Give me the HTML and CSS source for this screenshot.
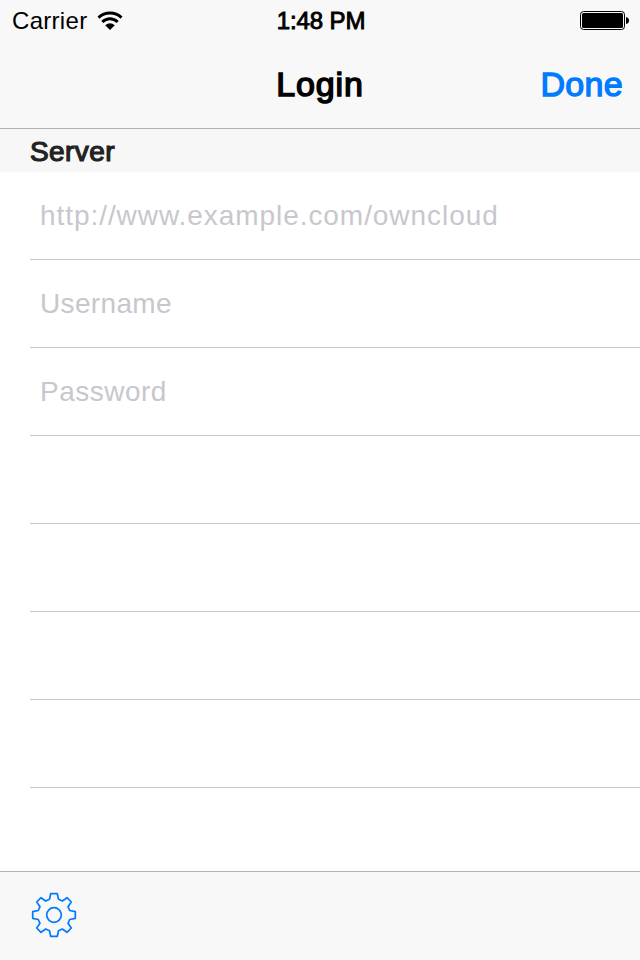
FILE: index.html
```html
<!DOCTYPE html>
<html lang="en">
<head>
<meta charset="utf-8">
<title>Login</title>
<link rel="stylesheet" href="styles.css">
</head>
<body>
<header class="top">
  <div class="status">
    <div class="carrier"><span class="carrier-name">Carrier</span>
      <svg class="wifi" width="26" height="20" viewBox="0 0 26 20">
        <path d="M1.500 6.600C8 .5 18 .5 24.500 6.600M5.300 11C9.800 6.800 16.200 6.800 20.700 11" fill="none" stroke="#000" stroke-width="3"/>
        <path d="M8.200 14.200Q13 10.400 17.800 14.200L13 19Z"/>
      </svg>
    </div>
    <span class="time">1:48 PM</span>
    <svg class="battery" width="50" height="20" viewBox="0 0 50 20">
      <rect x=".5" y=".5" width="44" height="18" rx="3" fill="none" stroke="#000"/>
      <rect x="2" y="2" width="41" height="15" rx="1.500"/>
      <path d="M46 6Q49 6.500 49 9.500T46 13Z"/>
    </svg>
  </div>
  <nav class="nav"><h1 class="title">Login</h1><a class="done">Done</a></nav>
</header>
<main class="table">
  <h2 class="section"><span>Server</span></h2>
  <div class="row"><span class="url">http://www.example.com/owncloud</span></div>
  <div class="row"><span class="user">Username</span></div>
  <div class="row"><span class="pass">Password</span></div>
  <div class="row"></div>
  <div class="row"></div>
  <div class="row"></div>
  <div class="row"></div>
</main>
<footer class="toolbar">
  <svg width="48" height="48" viewBox="-24 -24 48 48" fill="none" stroke="#007aff" stroke-width="1.700" stroke-linejoin="round">
    <circle r="7.300"/>
    <path d="M-3.300-21.300H3.300L4.500-15.700L8.300-14L13-17.300L17.300-13L14-8.300L15.700-4.500L21.300-3.300V3.300L15.700 4.500L14 8.300L17.300 13L13 17.300L8.300 14L4.500 15.700L3.300 21.300H-3.300L-4.500 15.700L-8.300 14L-13 17.300L-17.300 13L-14 8.300L-15.700 4.500L-21.300 3.300V-3.300L-15.700-4.500L-14-8.300L-17.300-13L-13-17.300L-8.300-14L-4.500-15.700Z"/>
  </svg>
</footer>
</body>
</html>
```
FILE: styles.css
```css
* { box-sizing: border-box; }
body {
  margin: 0;
  height: 960px;
  display: flex;
  flex-direction: column;
  background: #fff;
  font-family: "Liberation Sans", Arial, sans-serif;
  overflow: hidden;
}
h1, h2 { margin: 0; font-weight: 400; }
.top {
  height: 129px;
  background: #f8f8f8;
  border-bottom: 1px solid #b2b2b2;
}
.status {
  height: 40px;
  display: grid;
  grid-template-columns: 1fr auto 1fr;
  align-items: center;
  padding: 1px 10px 0 12px;
  font-size: 24px;
  line-height: 40px;
}
.carrier { display: flex; align-items: center; gap: 10px; }
.carrier-name { letter-spacing: 0.3px; }
.time { letter-spacing: -0.1px; -webkit-text-stroke: 0.9px #000; }
.battery { justify-self: end; }
.nav {
  height: 88px;
  display: grid;
  grid-template-columns: 1fr auto 1fr;
  align-items: center;
  padding: 1px 17px 0;
  font-size: 34px;
}
.title {
  grid-column: 2;
  font-size: 34px;
  letter-spacing: 0.9px;
  -webkit-text-stroke: 1.5px #000;
}
.done {
  justify-self: end;
  color: #007aff;
  letter-spacing: 0.3px;
  -webkit-text-stroke: 1.3px #007aff;
}
.table { flex: 1; }
.section {
  height: 43px;
  padding-left: 30px;
  background: #f7f7f7;
  color: #222;
  font-size: 28px;
  line-height: 45px;
  letter-spacing: 0.4px;
  -webkit-text-stroke: 1.2px #222;
}
.row {
  height: 88px;
  margin-left: 30px;
  padding-left: 10px;
  border-bottom: 1px solid #c8c7cc;
  color: #c7c7cd;
  font-size: 28px;
  line-height: 88px;
}
.url { letter-spacing: 0.94px; }
.user { letter-spacing: 0.35px; }
.pass { letter-spacing: 0.5px; }
.toolbar {
  height: 89px;
  padding: 19px 30px;
  background: #f8f8f8;
  border-top: 1px solid #b2b2b2;
}
```
